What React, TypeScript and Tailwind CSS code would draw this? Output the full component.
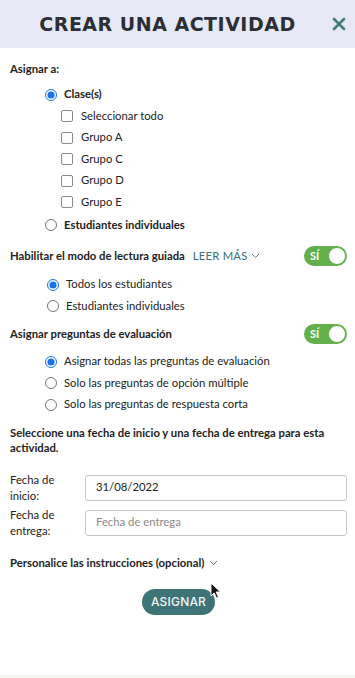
import React from 'react';

const Radio: React.FC<{ checked?: boolean; label: string; bold?: boolean }> = ({ checked, label, bold }) => (
  <label className="flex items-center gap-[7px] h-[21.5px]">
    <input type="radio" readOnly checked={!!checked} className="w-[12px] h-[12px] m-0 accent-[#1a73e8]" />
    <span className={bold ? 'font-bold' : ''}>{label}</span>
  </label>
);

const Check: React.FC<{ label: string }> = ({ label }) => (
  <label className="flex items-center gap-[8px] h-[21.5px]">
    <input type="checkbox" readOnly className="appearance-none w-[12px] h-[12px] m-0 border border-[#8a8a8a] rounded-[2px] bg-white" />
    <span>{label}</span>
  </label>
);

const Toggle: React.FC = () => (
  <div className="w-[43px] h-[20px] rounded-full bg-[#62b04c] flex items-center justify-between pl-[6px] pr-[1px]">
    <span className="text-white font-bold text-[11px]">SÍ</span>
    <span className="w-[18px] h-[18px] rounded-full bg-white border border-[#62b04c]" />
  </div>
);

const Chevron: React.FC = () => (
  <svg width="9" height="6" viewBox="0 0 9 6" fill="none" stroke="#6b7280" strokeWidth="1">
    <path d="M1 1l3.5 3.5L8 1" />
  </svg>
);

export default function App() {
  return (
    <div className="w-[355px] h-[678px] bg-white text-[11.3px] text-[#222] relative overflow-hidden" style={{ fontFamily: 'Lato, "Noto Sans", sans-serif' }}>
      <div className="h-[48px] bg-[#e6e9f5] flex items-center relative">
        <h1 className="w-full text-center pr-[20px] text-[19px] font-bold tracking-[0.5px] text-[#2d2f36]" style={{ fontFamily: '"DejaVu Sans", Inter, sans-serif' }}>
          CREAR UNA ACTIVIDAD
        </h1>
        <svg className="absolute right-[9px] top-[17px]" width="14" height="14" viewBox="0 0 14 14" stroke="#3e7d78" strokeWidth="2.6" strokeLinecap="round">
          <path d="M2 2l10 10M12 2L2 12" />
        </svg>
      </div>

      <div className="pl-[10px] pr-[8px] pt-[12px]">
        <p className="font-bold leading-[18px]">Asignar a:</p>
        <div className="pl-[35px] pt-[6px]">
          <Radio checked label="Clase(s)" bold />
          <div className="pl-[16px]">
            <Check label="Seleccionar todo" />
            <Check label="Grupo A" />
            <Check label="Grupo C" />
            <Check label="Grupo D" />
            <Check label="Grupo E" />
          </div>
          <div className="mt-[1.5px]">
            <Radio label="Estudiantes individuales" bold />
          </div>
        </div>

        <div className="flex items-center justify-between mt-[10px] h-[20px]">
          <div className="flex items-center">
            <span className="font-bold">Habilitar el modo de lectura guiada</span>
            <span className="ml-[8px] text-[#3c6e7a] tracking-[0.2px]">LEER MÁS</span>
            <span className="ml-[3px]"><Chevron /></span>
          </div>
          <Toggle />
        </div>
        <div className="pl-[37px] pt-[8px]">
          <Radio checked label="Todos los estudiantes" />
          <Radio label="Estudiantes individuales" />
        </div>

        <div className="flex items-center justify-between mt-[7px] h-[20px]">
          <span className="font-bold">Asignar preguntas de evaluación</span>
          <Toggle />
        </div>
        <div className="pl-[35px] pt-[7px]">
          <Radio checked label="Asignar todas las preguntas de evaluación" />
          <Radio label="Solo las preguntas de opción múltiple" />
          <Radio label="Solo las preguntas de respuesta corta" />
        </div>

        <p className="font-bold leading-[15px] mt-[9px]">
          Seleccione una fecha de inicio y una fecha de entrega para esta actividad.
        </p>

        <div className="mt-[17px] flex flex-col gap-[3px]">
          <div className="flex items-center">
            <span className="w-[75px] leading-[16px]">Fecha de<br />inicio:</span>
            <div className="flex-1 h-[26px] border border-[#c8c8c8] rounded-[3px] flex items-center px-[10px]">31/08/2022</div>
          </div>
          <div className="flex items-center">
            <span className="w-[75px] leading-[16px]">Fecha de<br />entrega:</span>
            <div className="flex-1 h-[26px] border border-[#c8c8c8] rounded-[3px] flex items-center px-[10px] text-[#8a8a8a]">Fecha de entrega</div>
          </div>
        </div>

        <div className="flex items-center mt-[16px]">
          <span className="font-bold">Personalice las instrucciones (opcional)</span>
          <span className="ml-[5px]"><Chevron /></span>
        </div>

        <div className="flex justify-center mt-[18px]">
          <button className="h-[26px] px-[9px] rounded-full bg-[#3e7477] text-[#f2f4f4] text-[12px] font-medium tracking-[0.2px]" style={{ fontFamily: 'Inter, "DejaVu Sans", sans-serif' }}>
            ASIGNAR
          </button>
        </div>
      </div>

      <svg className="absolute left-[210px] top-[582px]" width="12" height="17" viewBox="0 0 12 17">
        <path d="M1 1v13l3.2-3 2.2 5 2-1-2.2-5H10.5z" fill="#111" stroke="#fff" strokeWidth="1" />
      </svg>
      <div className="absolute bottom-0 left-0 w-full h-[3px] bg-[#f6f6f0]" />
    </div>
  );
}
